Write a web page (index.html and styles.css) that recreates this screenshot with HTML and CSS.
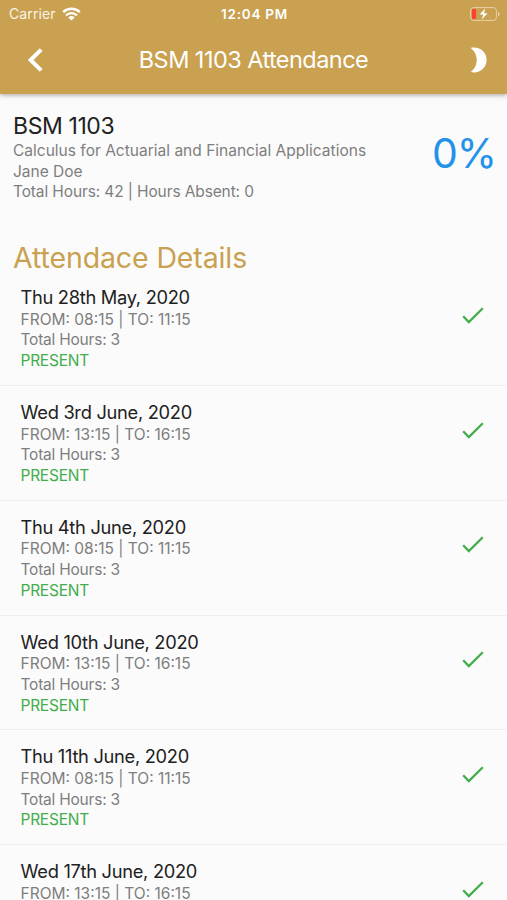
FILE: index.html
```html
<!DOCTYPE html>
<html lang="en">
<head>
  <meta charset="UTF-8">
  <meta name="viewport" content="width=device-width, initial-scale=1.0">
  <title>BSM 1103 Attendance</title>
  <link rel="stylesheet" href="styles.css">
</head>
<body>
  <header class="app-header">
    <div class="status-bar">
      <div class="carrier">
        <span>Carrier</span>
        <svg class="wifi" viewBox="0 0 19 14" width="19" height="14">
          <path d="M1.2 5.1a12 12 0 0 1 16.6 0" fill="none" stroke="#fff" stroke-width="2.5"/>
          <path d="M4 8.4a8 8 0 0 1 11 0" fill="none" stroke="#fff" stroke-width="2.3"/>
          <path d="M9.5 13.6L6.3 10.6a4.7 4.7 0 0 1 6.4 0z" fill="#fff"/>
        </svg>
      </div>
      <span class="clock">12:04 PM</span>
      <svg class="battery" viewBox="0 0 30 14" width="30" height="14">
        <rect x=".6" y=".6" width="25.8" height="12.8" rx="3" fill="none" stroke="#e6d2aa" stroke-width="1"/>
        <path d="M28 4.7c2 .8 2 3.8 0 4.6z" fill="#e6d2aa"/>
        <rect x="2" y="2" width="4" height="10" rx="1" fill="#fb4032"/>
        <path d="M15.2 1.6L9.6 7.5h3.6l-1.4 4.9 5.8-6.2H14z" fill="#fff"/>
      </svg>
    </div>
    <div class="nav-bar">
      <svg class="back" viewBox="0 0 16 24" width="16" height="24">
        <path d="M14.2 1.6L3.6 12l10.6 10.4" fill="none" stroke="#fff" stroke-width="4"/>
      </svg>
      <h1 class="title">BSM 1103 Attendance</h1>
      <svg class="moon" viewBox="0 0 17 26" width="17" height="26">
        <path d="M.5 1C9.5-1 16.6 5 16.6 13S9.500 27 .5 25C8.800 19.500 8.800 6.500 .5 1z" fill="#fff"/>
      </svg>
    </div>
  </header>

  <main>
    <section class="summary">
      <div class="course">
        <h2 class="code">BSM 1103</h2>
        <p class="course-name">Calculus for Actuarial and Financial Applications</p>
        <p class="lecturer">Jane Doe</p>
        <p class="totals">Total Hours: 42 | Hours Absent: 0</p>
      </div>
      <div class="percent">0%</div>
    </section>

    <h2 class="section-title">Attendace Details</h2>

    <ul class="lessons">
      <li class="lesson">
        <div>
          <h3 class="date">Thu 28th May, 2020</h3>
          <p class="time">FROM: 08:15 | TO: 11:15</p>
          <p class="hours">Total Hours: 3</p>
          <p class="present">PRESENT</p>
        </div>
        <svg class="check" viewBox="0 0 22 17" width="22" height="17"><path d="M1.2 9.2l5.6 5.8L20.8 1.3" /></svg>
      </li>
      <li class="lesson">
        <div>
          <h3 class="date">Wed 3rd June, 2020</h3>
          <p class="time">FROM: 13:15 | TO: 16:15</p>
          <p class="hours">Total Hours: 3</p>
          <p class="present">PRESENT</p>
        </div>
        <svg class="check" viewBox="0 0 22 17" width="22" height="17"><path d="M1.2 9.2l5.6 5.8L20.8 1.3" /></svg>
      </li>
      <li class="lesson">
        <div>
          <h3 class="date">Thu 4th June, 2020</h3>
          <p class="time">FROM: 08:15 | TO: 11:15</p>
          <p class="hours">Total Hours: 3</p>
          <p class="present">PRESENT</p>
        </div>
        <svg class="check" viewBox="0 0 22 17" width="22" height="17"><path d="M1.2 9.2l5.6 5.8L20.8 1.3" /></svg>
      </li>
      <li class="lesson">
        <div>
          <h3 class="date">Wed 10th June, 2020</h3>
          <p class="time">FROM: 13:15 | TO: 16:15</p>
          <p class="hours">Total Hours: 3</p>
          <p class="present">PRESENT</p>
        </div>
        <svg class="check" viewBox="0 0 22 17" width="22" height="17"><path d="M1.2 9.2l5.6 5.8L20.8 1.3" /></svg>
      </li>
      <li class="lesson">
        <div>
          <h3 class="date">Thu 11th June, 2020</h3>
          <p class="time">FROM: 08:15 | TO: 11:15</p>
          <p class="hours">Total Hours: 3</p>
          <p class="present">PRESENT</p>
        </div>
        <svg class="check" viewBox="0 0 22 17" width="22" height="17"><path d="M1.2 9.2l5.6 5.8L20.8 1.3" /></svg>
      </li>
      <li class="lesson">
        <div>
          <h3 class="date">Wed 17th June, 2020</h3>
          <p class="time">FROM: 13:15 | TO: 16:15</p>
        </div>
        <svg class="check" viewBox="0 0 22 17" width="22" height="17"><path d="M1.2 9.2l5.6 5.8L20.8 1.3" /></svg>
      </li>
    </ul>
  </main>
</body>
</html>
```

FILE: styles.css
```css
* {
  box-sizing: border-box;
}

body {
  margin: 0;
  height: 100vh;
  overflow: hidden;
  display: flex;
  flex-direction: column;
  background: #fbfbfb;
  color: #212121;
  font-family: Inter, "Liberation Sans", sans-serif;
}

h1, h2, h3, p, ul {
  margin: 0;
  padding: 0;
  font-weight: 400;
  white-space: nowrap;
}

svg {
  display: block;
}

main {
  flex: 1;
  min-height: 0;
  overflow: hidden;
}

/* === HEADER === */
.app-header {
  flex: none;
  height: 94px;
  background: #c9a150;
  color: #fff;
  box-shadow: 0 1px 5px rgba(0, 0, 0, 0.35);
  z-index: 1;
}

.status-bar {
  height: 27px;
  padding: 0 7px 0 9px;
  display: grid;
  grid-template-columns: 1fr auto 1fr;
  align-items: center;
}

.carrier {
  display: flex;
  align-items: center;
  gap: 6px;
  font-size: 14px;
  letter-spacing: 0.1px;
  color: #fbf4e6;
}

.clock {
  font-size: 13.5px;
  font-weight: 600;
  letter-spacing: 0.75px;
}

.battery {
  justify-self: end;
}

.nav-bar {
  height: 65px;
  padding: 0 20px 0 27px;
  display: grid;
  grid-template-columns: 1fr auto 1fr;
  align-items: center;
}

.title {
  padding-right: 7px;
  font-size: 23.5px;
  letter-spacing: -0.55px;
}

.moon {
  justify-self: end;
}

/* === COURSE SUMMARY === */
.summary {
  height: 145px;
  padding: 18px 11px 0 13px;
  display: flex;
  justify-content: space-between;
}

.code {
  font-size: 23px;
  line-height: 29px;
  letter-spacing: -0.4px;
}

.course-name,
.lecturer,
.totals,
.time,
.hours,
.present {
  font-size: 15.5px;
  line-height: 20.7px;
  color: #7e7e7e;
}

.course-name {
  letter-spacing: 0.01px;
}

.totals {
  letter-spacing: -0.12px;
}

.percent {
  margin-top: 16px;
  font-size: 41px;
  line-height: 50px;
  letter-spacing: -1px;
  color: #2491ea;
}

.section-title {
  padding-left: 13px;
  font-size: 28.5px;
  line-height: 37px;
  letter-spacing: -0.12px;
  color: #c9a150;
}

/* === LESSON LIST === */
.lessons {
  list-style: none;
}

.lesson {
  height: 114.8px;
  padding: 15px 23px 0 20.5px;
  display: flex;
  justify-content: space-between;
  border-bottom: 1px solid #efefef;
}

.lesson:first-child {
  height: 110px;
  padding-top: 10px;
}

.date {
  padding-bottom: 1.5px;
  font-size: 18.3px;
  line-height: 22px;
  letter-spacing: -0.3px;
}

.hours {
  letter-spacing: -0.22px;
}

.lesson .present {
  letter-spacing: -0.25px;
  color: #43ad4c;
}

.check {
  margin-top: 20.5px;
  fill: none;
  stroke: #43ad4c;
  stroke-width: 2.3;
}
```
